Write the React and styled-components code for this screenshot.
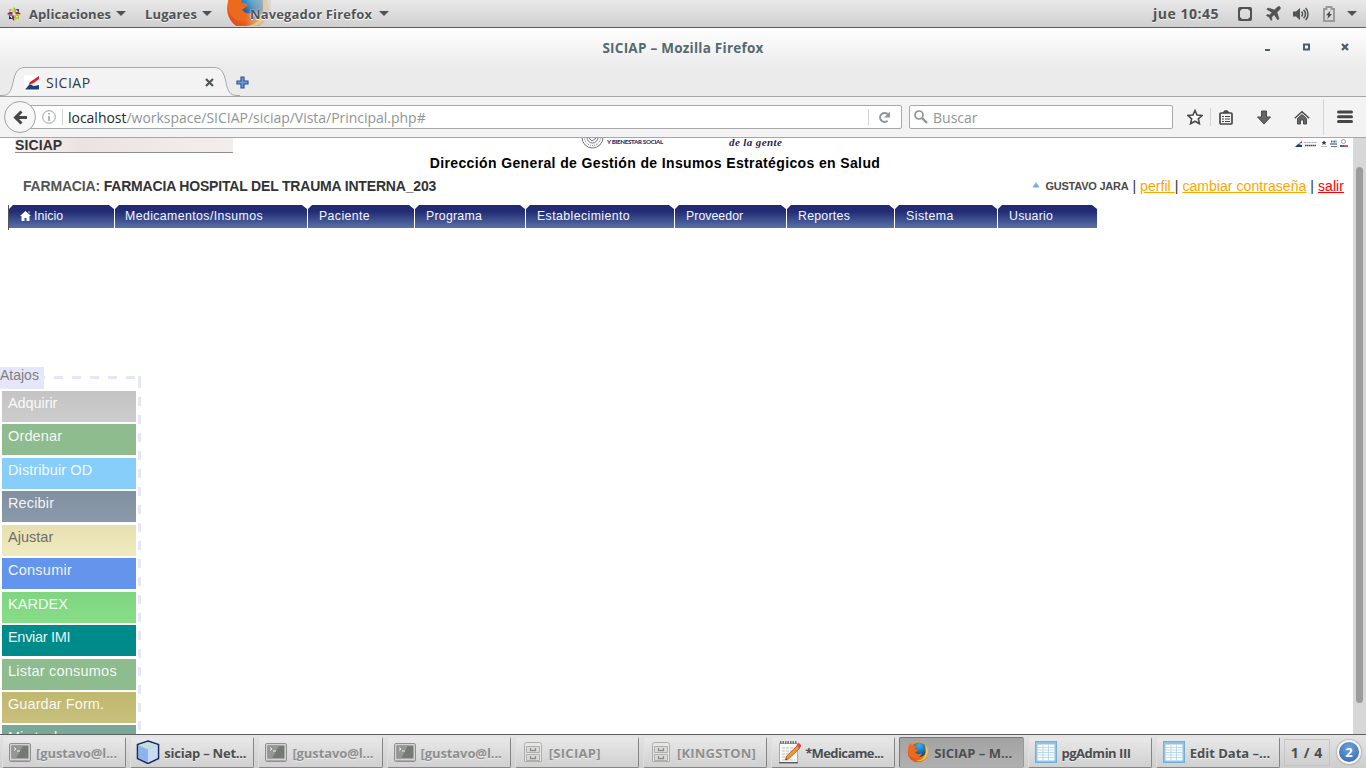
import React from "react";
import styled, { createGlobalStyle, css } from "styled-components";

const shellFont = `"Open Sans", "Noto Sans", sans-serif`;
const pageFont = `"Liberation Sans", Arial, sans-serif`;

const Global = createGlobalStyle`
  *, *::before, *::after { box-sizing: border-box; }
  body { margin: 0; background: #fff; overflow: hidden; }
  svg { display: block; flex: none; }
`;

const Desktop = styled.div`
  width: 1366px;
  height: 768px;
  display: flex;
  flex-direction: column;
  overflow: hidden;
`;

/* ---------- desktop top panel ---------- */

const TopPanel = styled.header`
  height: 28px;
  flex: none;
  display: flex;
  align-items: center;
  padding: 0 9px 0 7px;
  background: linear-gradient(#e9e9e9, #cfcfcf);
  border-bottom: 1px solid #5f5f5f;
  font: 700 13px/28px ${shellFont};
  color: #505354;
  text-shadow: 0 1px 0 rgba(255, 255, 255, 0.7);
`;

const PanelMenu = styled.div`
  display: flex;
  align-items: center;
  height: 27px;
  width: ${(p) => p.$width}px;
  white-space: pre;
  letter-spacing: ${(p) => p.$spacing || 0}px;
  gap: 5px;
  svg.lead { margin-right: 3px; }
  span { padding-top: 1px; }
`;

const BrowserMenu = styled(PanelMenu)`
  position: relative;
  padding-left: 23px;
  gap: 7px;
  span { position: relative; text-shadow: 0 0 2px #fff, 0 1px 0 #fff; }
`;

const BrowserBadge = styled.svg`
  position: absolute;
  left: 0;
  top: 0;
`;

const PanelStatus = styled.div`
  margin-left: auto;
  display: flex;
  align-items: center;
`;

const Clock = styled.span`
  font-size: 14px;
  letter-spacing: 0.52px;
  width: 85px;
  white-space: pre;
`;

const StatusIcon = styled.span`
  width: ${(p) => p.$width}px;
  display: flex;
`;

/* ---------- browser window chrome ---------- */

const Chrome = styled.div`
  height: 69px;
  flex: none;
  display: flex;
  flex-direction: column;
  background: linear-gradient(#fefefe, #ebebeb 60%, #ebebeb);
  border-bottom: 1px solid #a5a6a7;
`;

const TitleBar = styled.div`
  height: 40px;
  display: grid;
  grid-template-columns: 200px 1fr 200px;
  align-items: center;
  font: 700 13.5px/20px ${shellFont};
  letter-spacing: 0.25px;
  color: #566970;
  text-align: center;
`;

const WindowButtons = styled.div`
  display: flex;
  justify-content: flex-end;
  gap: 30px;
  padding: 0 17px 1px 0;
`;

const TabStrip = styled.div`
  height: 29px;
  display: flex;
  align-items: center;
`;

const Tab = styled.div`
  position: relative;
  width: 236px;
  height: 29px;
  padding: 2px 0 0 24px;
  display: flex;
  align-items: center;
  font: 14px/20px ${shellFont};
  color: #333a3d;
  > * { position: relative; }
  > span { margin: 1px 0 0 6px; width: 159px; font-size: 14px; letter-spacing: 0.5px; }
`;

const TabShape = styled.svg`
  && { position: absolute; left: 0; top: 0; }
`;

const NewTab = styled.span`
  padding-top: 2px;
`;

const Toolbar = styled.div`
  height: 41px;
  flex: none;
  display: flex;
  align-items: center;
  background: #f3f3f3;
  border-bottom: 1px solid #a5a6a7;
  padding-left: 4px;
`;

const BackButton = styled.div`
  width: 32px;
  height: 32px;
  border-radius: 50%;
  border: 1px solid #a2a2a2;
  background: #f7f7f7;
  display: flex;
  align-items: center;
  justify-content: center;
  z-index: 1;
`;

const field = css`
  height: 24px;
  display: flex;
  align-items: center;
  background: #fff;
  border: 1px solid #a6a8a9;
  border-radius: 2px;
  font: 14px/22px ${shellFont};
  color: #8f9495;
  span { padding-top: 2px; }
`;

const UrlField = styled.div`
  ${field}
  width: 876px;
  margin-left: -10px;
  padding-left: 15px;
  b { font-weight: 400; color: #23282a; }
`;

const UrlText = styled.span`
  flex: 1;
  white-space: pre;
  letter-spacing: -0.02px;
`;

const FieldRule = styled.i`
  width: 1px;
  height: 16px;
  background: #cfd2d3;
  margin: 0 ${(p) => p.$after}px 0 ${(p) => p.$before}px;
`;

const SearchField = styled.div`
  ${field}
  width: 264px;
  margin-left: 7px;
  padding-left: 4px;
  gap: 5px;
`;

const ToolIcon = styled.span`
  margin-left: ${(p) => p.$gap}px;
`;

const ToolRule = styled.i`
  width: 1px;
  height: ${(p) => p.$height}px;
  margin-left: ${(p) => p.$gap}px;
  background: #d2d2d2;
`;

/* ---------- web page ---------- */

const Viewport = styled.main`
  flex: 1;
  min-height: 0;
  display: flex;
  overflow: hidden;
  background: #fff;
`;

const Page = styled.div`
  position: relative;
  width: 1353px;
  font-family: ${pageFont};
`;

const ScrollTrack = styled.div`
  width: 13px;
  padding: 29px 3px 31px;
  background: #d7d7d7;
`;

const ScrollThumb = styled.div`
  height: 100%;
  border-radius: 4px;
  background: #9b9c9d;
`;

const Banner = styled.div`
  height: 16px;
  display: flex;
  align-items: flex-start;
  padding: 0 4px 0 15px;
`;

const AppName = styled.div`
  width: 218px;
  height: 15px;
  font: 700 14px/14px ${pageFont};
  letter-spacing: 0.1px;
  color: #333;
  background: linear-gradient(90deg, #f6f3f3, #ebe3e3 30%, #f3eeee);
  border-bottom: 1px solid #8f8a8a;
`;

const Ministry = styled.div`
  display: flex;
  margin-left: 348px;
  width: 148px;
  gap: 3px;
  font: 900 6.2px/8px Lato, sans-serif;
  letter-spacing: -0.32px;
  color: #35305c;
  white-space: nowrap;
`;

const Slogan = styled.div`
  font: italic 700 11px/8px "Liberation Serif", serif;
  letter-spacing: 0.4px;
  color: #2a1e52;
  width: 566px;
`;

const OfficeTitle = styled.h1`
  margin: 0;
  width: 1310px;
  font: 700 14px/19px ${pageFont};
  letter-spacing: 0.37px;
  text-align: center;
  color: #000;
`;

const SessionRow = styled.div`
  height: 32px;
  padding: 0 9px 0 23px;
  display: flex;
  justify-content: space-between;
  font: 700 14px/27px ${pageFont};
  letter-spacing: -0.18px;
  color: #333;
`;

const Muted = styled.span`
  color: #555;
`;

const UserLinks = styled.div`
  display: flex;
  white-space: pre;
  font-weight: 400;
  letter-spacing: 0.06px;
  strong { font-size: 11px; letter-spacing: -0.23px; color: #4a4a4a; margin-left: 5px; }
  svg { margin-top: 8px; }
`;

const PageLink = styled.a`
  color: ${(p) => p.$color};
  text-decoration: underline;
`;

const MenuBar = styled.nav`
  display: flex;
  gap: 1px;
  margin-left: 8px;
  height: 25px;
  border-left: 1px solid #555;
  width: 1090px;
`;

const MenuItem = styled.a`
  width: ${(p) => p.$width}px;
  height: 23px;
  padding-left: ${(p) => p.$pad || 10}px;
  display: flex;
  gap: 3px;
  font: 12.3px/23px ${pageFont};
  letter-spacing: ${(p) => p.$spacing || 0}px;
  color: #f4f6ff;
  background: linear-gradient(#212970, #232d77 30%, #5971a5);
  clip-path: polygon(4px 0, calc(100% - 5px) 0, 100% 4px, 100% 100%, 0 100%, 0 4px);
  svg { margin-top: 6px; }
`;

/* Shortcut panel floats over the page, pinned to its left edge. */
const Shortcuts = styled.aside`
  position: absolute;
  left: 0;
  top: 229px;
  width: 141px;
`;

const ShortcutLegend = styled.div`
  display: flex;
  height: 22px;
  font: 14px/17px ${pageFont};
  color: #808080;
  span { width: 44px; background: #e6e6fa; }
  &::after {
    content: "";
    flex: 1;
    height: 3px;
    margin-top: 9px;
    background: repeating-linear-gradient(90deg, #e6e6fa 0 1px, transparent 1px 10px, #e6e6fa 10px 18px);
  }
`;

const ShortcutBody = styled.div`
  display: flex;
  justify-content: space-between;
  height: 400px;
  padding: 2px 0 0 2px;
`;

const DashedEdge = styled.i`
  width: 3px;
  height: 400px;
  margin-top: -15px;
  background: linear-gradient(#e6e6fa, #e6e6fa) 0 0 / 3px 12px no-repeat,
    repeating-linear-gradient(#e6e6fa 0 9px, transparent 9px 18px) 0 3px no-repeat;
`;

const ShortcutList = styled.div`
  display: flex;
  flex-direction: column;
  gap: 2.44px;
  width: 134px;
`;

const Shortcut = styled.a`
  flex: none;
  height: 31px;
  padding-left: 6px;
  font: 14.5px/24px ${pageFont};
  letter-spacing: ${(p) => p.$spacing || 0}px;
  color: ${(p) => p.$ink || "rgba(255,255,255,.92)"};
  background: linear-gradient(${(p) => p.$from}, ${(p) => p.$to});
`;

/* ---------- desktop bottom panel ---------- */

const TaskBar = styled.footer`
  height: 34px;
  flex: none;
  display: flex;
  align-items: center;
  gap: 4px;
  padding: 1px 5px 0 2px;
  background: linear-gradient(#e4e4e4, #cdcdcd);
  border-top: 1px solid #5f5f5f;
  font: 700 13px/30px ${shellFont};
`;

const Task = styled.div`
  flex: none;
  width: 124.2px;
  height: 31px;
  padding: 0 0 0 ${(p) => (p.$active ? 6 : 5)}px;
  display: flex;
  align-items: center;
  white-space: pre;
  color: ${(p) => (p.$dim ? "#8d8f8f" : "#4b4e4f")};
  letter-spacing: ${(p) => p.$spacing || 0}px;
  background: ${(p) => (p.$active ? "linear-gradient(#a3a3a3, #b0b0b0)" : "linear-gradient(#e8e8e8, #d0d0d0)")};
  border: 1px solid;
  border-color: ${(p) => (p.$active ? "#777 #999 #aaa #777" : "#e6e6e6 #858585 #858585 #dedede")};
  border-radius: 2px;
  text-shadow: 0 1px 0 rgba(255, 255, 255, ${(p) => (p.$active ? 0.15 : 0.6)});
  > span { margin: 2px 0 0; }
  > svg { width: 24px; height: 24px; margin-right: 4px; }
`;

const Pager = styled.div`
  width: 46px;
  height: 27px;
  text-align: center;
  line-height: 25px;
  font-size: 14px;
  letter-spacing: 0.6px;
  color: #4b4e4f;
  border: 1px solid #c5c5c5;
  white-space: pre;
  margin-right: 3px;
`;

const Notice = styled.div`
  width: 24px;
  height: 24px;
  border-radius: 50%;
  border: 2px solid #f4f6f8;
  background: radial-gradient(circle at 50% 30%, #6ea0dc, #2f66b0);
  box-shadow: 0 0 2px #666;
  color: #fff;
  text-align: center;
  line-height: 20px;
`;

/* ---------- drawings ---------- */

const Caret = () => (
  <svg width="10" height="5" viewBox="0 0 10 5"><path d="M0 0h10L5 5z" fill="#505354" /></svg>
);

const CentosLogo = () => (
  <svg className="lead" width="14" height="14" viewBox="0 0 14 14">
    <path d="M7 0 9 2.3v3.2H7z" fill="#9ccd2a" /><path d="M7 0 5 2.3v3.2h2z" fill="#bfdc66" />
    <path d="M14 7 11.5 9H8.5V7z" fill="#efa724" /><path d="M14 7 11.5 5H8.5v2z" fill="#4a4c90" />
    <path d="M7 14 5 11.7V8.5h2z" fill="#4a4c90" /><path d="M7 14l2-2.3V8.5H7z" fill="#efa724" />
    <path d="M0 7 2.5 5h3v2z" fill="#932279" /><path d="M0 7l2.5 2h3V7z" fill="#b25a9c" />
    <path d="M2 2h3.5L2 5.5z" fill="#efa724" /><path d="M12 2v3.5L8.5 2z" fill="#932279" />
    <path d="M2 12V8.5L5.5 12z" fill="#252770" /><path d="M12 12H8.5L12 8.5z" fill="#9ccd2a" />
  </svg>
);

const FirefoxArt = ({ id }) => (
  <>
    <defs>
      <linearGradient id={`${id}f`} x1="1" y1="0" x2="0" y2="1">
        <stop offset="0" stopColor="#ffce2e" /><stop offset=".45" stopColor="#f58220" /><stop offset="1" stopColor="#d83a1c" />
      </linearGradient>
      <radialGradient id={`${id}g`} cx=".5" cy=".2" r=".9">
        <stop offset="0" stopColor="#3bb4e8" /><stop offset=".6" stopColor="#1a62ab" /><stop offset="1" stopColor="#0d2a63" />
      </radialGradient>
    </defs>
    <circle cx="20" cy="20" r="19" fill={`url(#${id}f)`} />
    <circle cx="22" cy="16" r="13.5" fill={`url(#${id}g)`} />
    <path d="M2 12C3 8 5 5 7 3c0 3 1 5 3 6 3-1 6 0 8 1-2 1-4 2-4 4 2 1 4 1 6 2-1 3-4 3-5 5 3 4 8 4 12 1-1 6-6 9-12 9C6 31 0 22 2 12z" fill="#ec6a1e" />
    <path d="M34 7c5 6 6 17-1 25-5 5-12 6-17 4 12 0 18-8 18-17 0-4-1-8 0-12z" fill="#fdc52f" />
  </>
);

const PlaneIcon = () => (
  <svg width="15" height="15" viewBox="0 0 15 15">
    <path d="M14 1c-1-1-2.5 0-3.500 1L8.500 4 2 2 .8 3.200 6 6.500 3.700 9l-2.500-.4L.3 9.500l3 1.700L5 14.500l1-.9L5.700 11 8.200 8.700 11.800 14 13 12.800 11 6.300l2-2c1-1 2-2.300 1-3.300z" fill="#505354" stroke="#505354" strokeWidth=".6" />
  </svg>
);

const SpeakerIcon = () => (
  <svg width="17" height="14" viewBox="0 0 17 14" fill="none" stroke="#505354" strokeWidth="1.5">
    <path d="M0 4.500h3L7 1v12L3 9.500H0z" fill="#505354" stroke="none" />
    <path d="M8.600 4.500c1.200 1.300 1.200 3.700 0 5M10.600 2.700c2.300 2.600 2.300 6 0 8.600M12.600 1c3.200 3.300 3.200 8.700 0 12" />
  </svg>
);

const BatteryIcon = () => (
  <svg width="12" height="16" viewBox="0 0 12 16">
    <path d="M1 3h2.500V1h5v2H11v12H1z" fill="none" stroke="#999" strokeWidth="2" />
    <path d="M7.500 4.500 3 9.300h2.300L4.300 13 9 8H6.500z" fill="#444" />
  </svg>
);

const Favicon = () => (
  <svg width="16" height="16" viewBox="0 0 16 16">
    <path d="M0 0h16v16H0z" fill="#fff" />
    <path d="M15 1 6 7l-1.500 3 4-1L15 4z" fill="#d3222a" />
    <path d="M1 14.500 5 10l3-.3 2 1.300 5-1v4.500z" fill="#194076" />
    <path d="m7 9 4-1.500 1 2.500-3 1z" fill="#dfe5ec" />
  </svg>
);

const TerminalIcon = () => (
  <svg viewBox="0 0 24 24">
    <rect x="1.500" y="3.500" width="21" height="18" rx="1.500" fill="#d4d5d3" stroke="#8f908e" />
    <rect x="3.500" y="5.500" width="17" height="13" fill="#747a75" />
    <path d="M3.500 5.500h11.500L8 18.500H3.500z" fill="#949894" />
    <path d="m6 7.500 2 1.500-2 1.500M9 11h3" stroke="#eee" fill="none" />
    <path d="M3 20.500h18" stroke="#aaa" />
  </svg>
);

const CubeIcon = () => (
  <svg viewBox="0 0 24 24">
    <path d="M12 1 22.500 4.500v14L12 23.500 1.500 18.500v-14z" fill="#a9c6ee" stroke="#1c2a60" strokeWidth="1.600" />
    <path d="M12 1.900 21.500 5 12 9.500 2.500 5z" fill="#c4e0dc" />
    <path d="M2.500 5.300 12 9.700V22.500L2.500 18z" fill="#90b2ea" />
    <path d="M21.500 5.300 12 9.700V22.500l9.500-4.500z" fill="#c9dcf2" />
  </svg>
);

const CabinetIcon = () => (
  <svg viewBox="0 0 24 24" fill="#e6e6e5" stroke="#adaeac">
    <path d="M3.500 4.500q0-2 2-2h13q2 0 2 2v17h-17z" />
    <path d="M5.500 6.500h13v6h-13zM5.500 14.500h13v6h-13z" fill="#d9d9d8" />
    <path d="M9.500 8v2.500h5V8M9.500 16v2.500h5V16" fill="none" stroke="#8f908e" strokeWidth="1.300" />
  </svg>
);

const NotepadIcon = () => (
  <svg viewBox="0 0 24 24">
    <path d="M2.500 3.500h18v19h-18z" fill="#f8f8f6" stroke="#aaa" />
    <path d="M2 22.800h19" stroke="#333" />
    <path d="M3 2.500h17" stroke="#777" strokeWidth="3" strokeDasharray="1.500 1" />
    <path d="M5 8h13M5 11h12M5 14h10M5 17h9M5 20h13" stroke="#bdbdbd" strokeDasharray="3 1" />
    <path d="M20.500 5.500 23 8 12 18.500 8.500 20l1-3.800z" fill="#f0953a" stroke="#a8561c" strokeWidth=".8" />
    <path d="m20.500 4 3 3" stroke="#e04a50" strokeWidth="3.500" />
    <path d="m8.500 20 1.500-.7-1-1z" fill="#222" />
  </svg>
);

const TableIcon = () => (
  <svg viewBox="0 0 24 24">
    <rect x="1.500" y="1.500" width="21" height="21" fill="#8cc4e4" stroke="#6fb0d8" />
    <path d="M3.500 4.500h17v16h-17z" fill="#fff" />
    <path d="M3.500 7.500h17M3.500 10h17M3.500 12.500h17M3.500 15h17M3.500 17.500h17M9 4.500v16M14.500 4.500v16" stroke="#aed0e6" strokeWidth=".8" />
  </svg>
);

const FirefoxTaskIcon = () => (
  <svg viewBox="-2 -2 44 44"><FirefoxArt id="task" /></svg>
);

const HouseIcon = () => (
  <svg width="16" height="15" viewBox="0 0 16 15" fill="#666" stroke="#484848">
    <path d="M3.500 8.500 8 4.500l4.500 4v5.500h-3v-4h-3v4h-3z" />
    <path d="M.8 8.200 8 1.800l7.200 6.400" fill="none" strokeWidth="1.500" />
  </svg>
);

const menuItems = [
  { label: "Inicio", width: 105, pad: 11, home: true, spacing: 0.1 },
  { label: "Medicamentos/Insumos", width: 192, spacing: 0.41 },
  { label: "Paciente", width: 106, pad: 11, spacing: 0.4 },
  { label: "Programa", width: 110, pad: 11, spacing: 0.26 },
  { label: "Establecimiento", width: 148, pad: 11, spacing: 0.42 },
  { label: "Proveedor", width: 111, pad: 11, spacing: 0.05 },
  { label: "Reportes", width: 107, pad: 11, spacing: 0.27 },
  { label: "Sistema", width: 102, pad: 11, spacing: 0.5 },
  { label: "Usuario", width: 99, pad: 11, spacing: 0.25 },
];

const shortcuts = [
  { label: "Adquirir", from: "#c4c4c4", to: "#cccccc", spacing: -0.08 },
  { label: "Ordenar", from: "#8fbc8f", to: "#8fbc8f", spacing: 0.15 },
  { label: "Distribuir OD", from: "#87cefa", to: "#87cefa", spacing: 0.1 },
  { label: "Recibir", from: "#8090a0", to: "#8a9aaa", spacing: 0.15 },
  { label: "Ajustar", from: "#e6e0b0", to: "#f0eac0", ink: "#6e6e6e", spacing: 0.02 },
  { label: "Consumir", from: "#6495ed", to: "#6495ed", spacing: 0.25 },
  { label: "KARDEX", from: "#80d680", to: "#88de88", spacing: 0.08 },
  { label: "Enviar IMI", from: "#008b8b", to: "#008b8b", spacing: -0.3 },
  { label: "Listar consumos", from: "#8fbc8f", to: "#8fbc8f", spacing: 0.22 },
  { label: "Guardar Form.", from: "#c0b86e", to: "#c8c07c", spacing: 0.08 },
  { label: "Mi stock", from: "#7aa898", to: "#7aa898" },
];

const tasks = [
  { label: "[gustavo@l...", Icon: TerminalIcon, dim: true, spacing: -0.1 },
  { label: "siciap – Net...", Icon: CubeIcon, spacing: -0.22 },
  { label: "[gustavo@l...", Icon: TerminalIcon, dim: true, spacing: -0.1 },
  { label: "[gustavo@l...", Icon: TerminalIcon, dim: true, spacing: -0.1 },
  { label: "[SICIAP]", Icon: CabinetIcon, dim: true, spacing: 0.28 },
  { label: "[KINGSTON]", Icon: CabinetIcon, dim: true, spacing: 0.2 },
  { label: "*Medicame...", Icon: NotepadIcon, spacing: -0.6 },
  { label: "SICIAP – M...", Icon: FirefoxTaskIcon, active: true },
  { label: "pgAdmin III", Icon: TableIcon, spacing: -0.48 },
  { label: "Edit Data –...", Icon: TableIcon },
];

export default function App() {
  return (
    <Desktop>
      <Global />
      <TopPanel>
        <PanelMenu $width={138} $spacing={0.08}>
          <CentosLogo />
          <span>Aplicaciones</span>
          <Caret />
        </PanelMenu>
        <PanelMenu $width={82} $spacing={0.12}>
          <span>Lugares</span>
          <Caret />
        </PanelMenu>
        <BrowserMenu $width={170} $spacing={0.15}>
          <BrowserBadge width="44" height="26" viewBox="0 0 44 26">
            <defs>
              <linearGradient id="fade"><stop offset=".42" stopColor="#c8c8c8" stopOpacity="0" /><stop offset=".62" stopColor="#c8c8c8" stopOpacity=".45" /><stop offset=".95" stopColor="#d4d4d4" stopOpacity=".85" /></linearGradient>
            </defs>
            <g transform="translate(-1 -13) scale(1.09)"><FirefoxArt id="panel" /></g>
            <path d="M0 0h44v26H0z" fill="url(#fade)" />
          </BrowserBadge>
          <span>Navegador Firefox</span>
          <Caret />
        </BrowserMenu>
        <PanelStatus>
          <Clock>jue 10:45</Clock>
          <StatusIcon $width={28}>
            <svg width="14" height="14" viewBox="0 0 14 14"><rect x="1" y="1" width="12" height="12" rx="1" fill="none" stroke="#505354" strokeWidth="2" /><path d="M2 2h2L2 4zM12 2h-2l2 2zM2 12v-2l2 2zM12 12v-2l-2 2z" fill="#505354" /></svg>
          </StatusIcon>
          <StatusIcon $width={27}><PlaneIcon /></StatusIcon>
          <StatusIcon $width={30}><SpeakerIcon /></StatusIcon>
          <StatusIcon $width={24}><BatteryIcon /></StatusIcon>
          <Caret />
        </PanelStatus>
      </TopPanel>

      <Chrome>
        <TitleBar>
          <i />
          <span>SICIAP – Mozilla Firefox</span>
          <WindowButtons>
            <svg width="8" height="8" viewBox="0 0 8 8"><path d="M1 7h5" stroke="#4a5f69" strokeWidth="2" /></svg>
            <svg width="9" height="8" viewBox="0 0 9 8"><path d="M2 1.500h5v5H2z" fill="none" stroke="#4a5f69" strokeWidth="2" /></svg>
            <svg width="8" height="8" viewBox="0 0 8 8"><path d="m1 1 6 6M7 1 1 7" stroke="#4a5f69" strokeWidth="2.300" /></svg>
          </WindowButtons>
        </TitleBar>
        <TabStrip>
          <Tab>
            <TabShape width="240" height="29" viewBox="0 0 240 29">
              <path d="M0 28.500h2c7 0 9-4 11-13C15 5 18 .5 25 .5h189c7 0 10 4.500 12 15 2 9 4 13 11 13h3" fill="#f3f3f3" stroke="#a3a8ac" />
            </TabShape>
            <Favicon />
            <span>SICIAP</span>
            <svg width="9" height="9" viewBox="0 0 9 9"><path d="m1 1 7 7M8 1 1 8" stroke="#505558" strokeWidth="2.200" /></svg>
          </Tab>
          <NewTab>
            <svg width="13" height="13" viewBox="0 0 13 13"><path d="M5 1h3v4h4v3H8v4H5V8H1V5h4z" fill="#6f9bd0" stroke="#2c5590" strokeWidth="1.200" /></svg>
          </NewTab>
        </TabStrip>
      </Chrome>

      <Toolbar>
        <BackButton>
          <svg width="15" height="15" viewBox="0 0 15 15"><path d="M8.500 1.500 2.500 7.500l6 6M3 7.500h11" fill="none" stroke="#474747" strokeWidth="3" /></svg>
        </BackButton>
        <UrlField>
          <svg width="14" height="14" viewBox="0 0 14 14" fill="none" stroke="#9a9c9d"><circle cx="7" cy="7" r="6.300" /><path d="M7 3v1.500M7 6v5" strokeWidth="1.500" /></svg>
          <FieldRule $before={6} $after={5} />
          <UrlText><b>localhost</b>/workspace/SICIAP/siciap/Vista/Principal.php#</UrlText>
          <FieldRule $before={0} $after={9} />
          <svg width="14" height="13" viewBox="0 0 14 13"><path d="M9.500 9.800A4.500 4.500 0 1 1 10 3.500" fill="none" stroke="#8a98a3" strokeWidth="2" /><path d="M12 .5v6H6z" fill="#8a98a3" /></svg>
          <FieldRule $before={8} $after={0} style={{ visibility: "hidden" }} />
        </UrlField>
        <SearchField>
          <svg width="14" height="14" viewBox="0 0 14 14" fill="none" stroke="#909394"><circle cx="5" cy="5" r="4" strokeWidth="1.700" /><path d="m8 8 5 5" strokeWidth="2.400" /></svg>
          <span>Buscar</span>
        </SearchField>
        <ToolIcon $gap={14}>
          <svg width="16" height="16" viewBox="0 0 16 16"><path d="m8 1.500 2 4.500 5 .5-3.700 3.300 1.100 4.900L8 12.200l-4.400 2.500 1.100-4.900L1 6.500 6 6z" fill="#fff" stroke="#484848" strokeWidth="1.600" /></svg>
        </ToolIcon>
        <ToolRule $height={18} $gap={7} />
        <ToolIcon $gap={8}>
          <svg width="14" height="15" viewBox="0 0 14 15" fill="none" stroke="#484848"><rect x="1" y="3" width="12" height="11" rx="1" strokeWidth="1.700" /><path d="M4 2.500V2h1.500V.800h3V2H10v.5z" fill="#484848" /><path d="M3 6.500h2M6 6.500h5M3 9h2M6 9h5M3 11.500h2M6 11.500h5" /></svg>
        </ToolIcon>
        <ToolIcon $gap={24}>
          <svg width="14" height="15" viewBox="0 0 14 15"><path d="M4.500 1h5v6h4L7 14 .5 7h4z" fill="#666" stroke="#4a4a4a" /></svg>
        </ToolIcon>
        <ToolIcon $gap={23}><HouseIcon /></ToolIcon>
        <ToolRule $height={36} $gap={13} />
        <ToolIcon $gap={13}>
          <svg width="16" height="14" viewBox="0 0 16 14"><path d="M1.500 2h13M1.500 6.700h13M1.500 11.500h13" stroke="#454545" strokeWidth="3" strokeLinecap="round" /></svg>
        </ToolIcon>
      </Toolbar>

      <Viewport>
        <Page>
          <Banner>
            <AppName>SICIAP</AppName>
            <Ministry>
              <svg width="23" height="11" viewBox="0 0 23 11" fill="none" stroke="#6e6e7c"><circle cx="11.500" cy="-.5" r="10.500" /><circle cx="11.500" cy="-.5" r="8" strokeDasharray="1 1" /><circle cx="11.500" cy="-.5" r="5.500" /><path d="M8 0l3 3 4-3" /></svg>
              <span>Y BIENESTAR SOCIAL</span>
            </Ministry>
            <Slogan>de la gente</Slogan>
            <svg width="54" height="11" viewBox="0 0 54 11">
              <path d="M7 3 3 6l4-1z" fill="#d3222a" /><path d="m0 9 3-3 4 1v2z" fill="#194076" />
              <path d="M9 4.500h13" stroke="#a8acc4" strokeDasharray="2 .5" /><path d="M10 7.500h11" stroke="#3b4478" strokeWidth="1.500" strokeDasharray="1.500 .4" />
              <path d="m29 2.500 1 1.500h1.500l-1.300 1.200.5 1.800-1.700-1-1.700 1 .5-1.800L26.500 4H28z" fill="#3a3566" /><path d="M26 8.500h6" stroke="#bbb" />
              <path d="M36 3.500h6" stroke="#3d6489" strokeWidth="2" strokeDasharray="1 .5" /><path d="M35 6h7" stroke="#4a8f9c" strokeWidth="1.500" /><path d="M36 8.500h6" stroke="#a66" />
              <circle cx="48.500" cy="3.500" r="2" fill="none" stroke="#98a0b8" /><path d="M45 8h4" stroke="#3b4478" strokeWidth="1.700" /><path d="M49 8h4" stroke="#c7384a" strokeWidth="1.700" />
            </svg>
          </Banner>
          <OfficeTitle>Dirección General de Gestión de Insumos Estratégicos en Salud</OfficeTitle>
          <SessionRow>
            <div><Muted>FARMACIA:</Muted> FARMACIA HOSPITAL DEL TRAUMA INTERNA_203</div>
            <UserLinks>
              <svg width="8" height="7" viewBox="0 0 8 7"><path d="M4 .5 5.800 3.500H2.200z" fill="#9cc9ec" /><path d="M.5 6.500 2.500 3.300h3l2 3.200z" fill="#6fb0e2" /></svg>
              <strong>GUSTAVO JARA</strong>
              {" | "}<PageLink $color="orange">perfil </PageLink>{"| "}
              <PageLink $color="orange">cambiar contraseña</PageLink>{" | "}
              <PageLink $color="red">salir</PageLink>
            </UserLinks>
          </SessionRow>
          <MenuBar>
            {menuItems.map((m) => (
              <MenuItem key={m.label} $width={m.width} $pad={m.pad} $spacing={m.spacing}>
                {m.home && (
                  <svg width="11" height="10" viewBox="0 0 11 10"><path d="M5.500 0 11 5H9.500v5H6.500V7h-2v3h-3V5H0zM8 .5h1.500v2z" fill="#fff" /></svg>
                )}
                <span>{m.label}</span>
              </MenuItem>
            ))}
          </MenuBar>
          <Shortcuts>
            <ShortcutLegend><span>Atajos</span></ShortcutLegend>
            <ShortcutBody>
              <ShortcutList>
                {shortcuts.map((s) => (
                  <Shortcut key={s.label} $from={s.from} $to={s.to} $ink={s.ink} $spacing={s.spacing}>{s.label}</Shortcut>
                ))}
              </ShortcutList>
              <DashedEdge />
            </ShortcutBody>
          </Shortcuts>
        </Page>
        <ScrollTrack><ScrollThumb /></ScrollTrack>
      </Viewport>

      <TaskBar>
        {tasks.map(({ label, Icon, dim, active, spacing }, i) => (
          <Task key={i} $dim={dim} $active={active} $spacing={spacing}>
            <Icon />
            <span>{label}</span>
          </Task>
        ))}
        <Pager>1 / 4</Pager>
        <Notice>2</Notice>
      </TaskBar>
    </Desktop>
  );
}
